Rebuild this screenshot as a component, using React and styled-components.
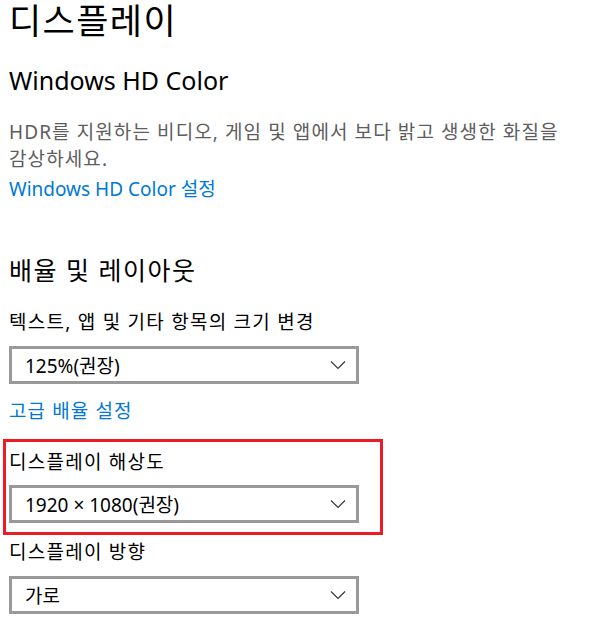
import React from "react";
import styled, { createGlobalStyle } from "styled-components";

const GlobalStyle = createGlobalStyle`
  body {
    margin: 0;
    background: #ffffff;
    font-family: "Noto Sans", "Noto Sans CJK KR", sans-serif;
    color: #000000;
  }
`;

const Page = styled.div`
  width: 610px;
  height: 636px;
  overflow: hidden;
  padding: 1px 0 0 9px;
  box-sizing: border-box;
`;

const Title = styled.h1`
  margin: 0;
  font-size: 35px;
  font-weight: 400;
  line-height: 40px;
  letter-spacing: 1.4px;
`;

const SubTitle = styled.h2`
  margin: ${props => props.$top}px 0 0;
  font-size: 25px;
  font-weight: 400;
  line-height: 32px;
  letter-spacing: ${props => props.$spacing || 0}px;
`;

const Description = styled.p`
  margin: 22.5px 0 0;
  width: 575px;
  font-size: 19px;
  line-height: 27px;
  letter-spacing: 1.1px;
  word-break: keep-all;
  color: #5d5d5d;
`;

const Link = styled.a`
  display: block;
  margin-top: ${props => props.$top}px;
  font-size: 19px;
  line-height: 27px;
  letter-spacing: ${props => props.$spacing || 0}px;
  color: #0078d7;
  text-decoration: none;
`;

const Label = styled.div`
  margin-top: ${props => props.$top}px;
  font-size: 19px;
  line-height: 27px;
  letter-spacing: 1.25px;
`;

const Select = styled.div`
  margin-top: ${props => props.$top}px;
  width: 350px;
  height: 38px;
  box-sizing: border-box;
  border: 3px solid #999999;
  display: flex;
  align-items: center;
  justify-content: space-between;
  padding: 0 10px 0 13px;
  font-size: 19px;
`;

const Highlight = styled.div`
  margin: 14.5px 0 0 -6px;
  width: 380px;
  box-sizing: border-box;
  border: 3px solid #ed1c24;
  padding: 6.5px 0 9px 3px;
`;

const Chevron = () => (
  <svg width="16" height="10" viewBox="0 0 16 10">
    <path d="M1 1.5 L8 8.5 L15 1.5" fill="none" stroke="#333" strokeWidth="1.1" />
  </svg>
);

const Dropdown = ({ top, children }) => (
  <Select $top={top}>
    <span>{children}</span>
    <Chevron />
  </Select>
);

export default function App() {
  return (
    <Page>
      <GlobalStyle />
      <Title>디스플레이</Title>
      <SubTitle $top={23}>Windows HD Color</SubTitle>
      <Description>
        HDR를 지원하는 비디오, 게임 및 앱에서 보다 밝고 생생한 화질을 감상하세요.
      </Description>
      <Link $top={3}>Windows HD Color 설정</Link>
      <SubTitle $top={51.5} $spacing={1.5}>배율 및 레이아웃</SubTitle>
      <Label $top={22.5}>텍스트, 앱 및 기타 항목의 크기 변경</Label>
      <Dropdown top={10.5}>125%(권장)</Dropdown>
      <Link $top={13.5} $spacing={1.1}>고급 배율 설정</Link>
      <Highlight>
        <Label $top={0}>디스플레이 해상도</Label>
        <Dropdown top={9.5}>1920 × 1080(권장)</Dropdown>
      </Highlight>
      <Label $top={3.5}>디스플레이 방향</Label>
      <Dropdown top={10.5}>가로</Dropdown>
    </Page>
  );
}
